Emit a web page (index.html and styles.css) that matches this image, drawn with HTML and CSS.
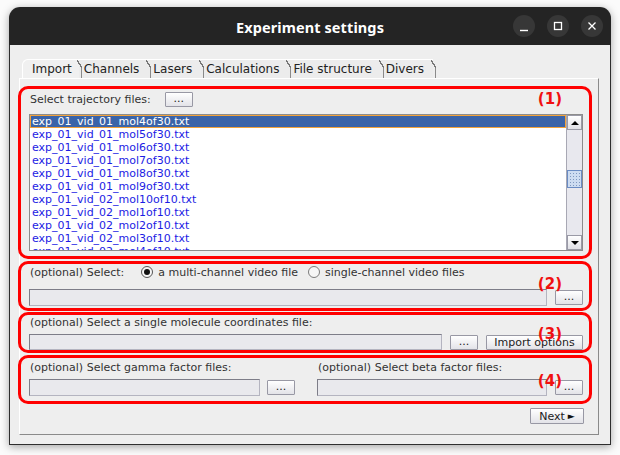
FILE: index.html
```html
<!DOCTYPE html>
<html>
<head>
<meta charset="utf-8">
<link rel="stylesheet" href="styles.css">
</head>
<body>
<div class="window">
  <div class="titlebar">
    <span class="title">Experiment settings</span>
    <div class="wbtns">
      <span class="wbtn"><svg width="22" height="22" viewBox="0 0 22 22"><path d="M7 15.5h8" stroke="#fff" stroke-width="1.4" fill="none"/></svg></span>
      <span class="wbtn"><svg width="22" height="22" viewBox="0 0 22 22"><rect x="7.5" y="7.5" width="7" height="7" stroke="#fff" stroke-width="1.3" fill="none"/></svg></span>
      <span class="wbtn"><svg width="22" height="22" viewBox="0 0 22 22"><path d="M7.5 7.5l7 7M14.5 7.5l-7 7" stroke="#fff" stroke-width="1.3" fill="none"/></svg></span>
    </div>
  </div>
  <div class="client">
    <div class="tabs">
      <div class="tab sel">Import</div>
      <div class="tab">Channels</div>
      <div class="tab">Lasers</div>
      <div class="tab">Calculations</div>
      <div class="tab">File structure</div>
      <div class="tab">Divers</div>
      <div class="tabfill"></div>
    </div>
    <div class="panel">
      <section class="box box1">
        <div class="row">
          <span class="lbl">Select trajectory files:</span>
          <span class="btn dots btn-traj">...</span>
        </div>
        <div class="list">
          <div class="items">
            <div class="item selected">exp_01_vid_01_mol4of30.txt</div>
            <div class="item">exp_01_vid_01_mol5of30.txt</div>
            <div class="item">exp_01_vid_01_mol6of30.txt</div>
            <div class="item">exp_01_vid_01_mol7of30.txt</div>
            <div class="item">exp_01_vid_01_mol8of30.txt</div>
            <div class="item">exp_01_vid_01_mol9of30.txt</div>
            <div class="item">exp_01_vid_02_mol10of10.txt</div>
            <div class="item">exp_01_vid_02_mol1of10.txt</div>
            <div class="item">exp_01_vid_02_mol2of10.txt</div>
            <div class="item">exp_01_vid_02_mol3of10.txt</div>
            <div class="item">exp_01_vid_02_mol4of10.txt</div>
          </div>
          <div class="sb">
            <div class="sb-btn"><span class="tri up"></span></div>
            <div class="sb-track"><div class="sb-thumb"></div></div>
            <div class="sb-btn"><span class="tri down"></span></div>
          </div>
        </div>
        <span class="mark m1">(1)</span>
      </section>

      <section class="box box2">
        <div class="row">
          <span class="lbl">(optional) Select:</span>
          <span class="radio on"></span>
          <span class="rlbl">a multi-channel video file</span>
          <span class="radio r2"></span>
          <span class="rlbl">single-channel video files</span>
        </div>
        <div class="frow">
          <span class="field"></span>
          <span class="btn dots">...</span>
        </div>
        <span class="mark m2">(2)</span>
      </section>

      <section class="box box3">
        <div class="row">
          <span class="lbl">(optional) Select a single molecule coordinates file:</span>
        </div>
        <div class="frow">
          <span class="field"></span>
          <span class="btn dots">...</span>
          <span class="btn wide">Import options</span>
        </div>
        <span class="mark m3">(3)</span>
      </section>

      <section class="box box4">
        <div class="cols">
          <div class="col">
            <div class="row"><span class="lbl">(optional) Select gamma factor files:</span></div>
            <div class="frow">
              <span class="field"></span>
              <span class="btn dots g">...</span>
            </div>
          </div>
          <div class="col">
            <div class="row"><span class="lbl">(optional) Select beta factor files:</span></div>
            <div class="frow">
              <span class="field"></span>
              <span class="btn dots">...</span>
            </div>
          </div>
        </div>
        <span class="mark m4">(4)</span>
      </section>

      <div class="footer">
        <span class="btn next">Next <span class="arr">&#9658;</span></span>
      </div>
    </div>
  </div>
</div>
</body>
</html>
```

FILE: styles.css
```css
html, body {
  margin: 0;
  padding: 0;
}
body {
  background: #fbfbfb;
  width: 620px;
  height: 455px;
  overflow: hidden;
  font-family: "DejaVu Sans", Verdana, sans-serif;
  font-size: 11px;
  color: #333333;
}
.window {
  margin: 7px 0 0 9px;
  width: 602px;
  border-radius: 11px 11px 0 0;
  box-shadow: 0 2px 9px rgba(0, 0, 0, 0.35);
}
.titlebar {
  height: 38px;
  background: #242424;
  border-radius: 11px 11px 0 0;
  display: grid;
  grid-template-columns: 1fr auto 1fr;
  align-items: center;
}
.title {
  grid-column: 2;
  font-family: "Noto Sans", "DejaVu Sans", sans-serif;
  font-weight: 700;
  font-size: 14.5px;
  color: #ffffff;
  letter-spacing: 0.1px;
  padding-top: 1px;
}
.wbtns {
  grid-column: 3;
  justify-self: end;
  display: flex;
  gap: 12px;
  padding-right: 8px;
}
.wbtn {
  width: 22px;
  height: 22px;
  border-radius: 50%;
  background: #373737;
  display: block;
}
.wbtn svg { display: block; }

.client {
  background: #eeeeee;
  border: 1px solid #2e2e2e;
  border-top: 0;
  box-sizing: border-box;
  height: 400px;
  padding: 14px 11px 9px 9px;
  display: flex;
  flex-direction: column;
}
.tabs {
  display: flex;
  height: 19px;
  padding-left: 3px;
  font-size: 12px;
  color: #222222;
}
.tab {
  position: relative;
  height: 19px;
  line-height: 19px;
  padding: 0 9px 0 5px;
  border-top: 1px solid #ffffff;
  box-sizing: border-box;
  background: #ececec;
}
.tab.sel {
  padding: 0 7px 0 9px;
  background: #f0f0f0;
  border-top-left-radius: 6px;
  border-left: 1px solid #ffffff;
}
.tab::after {
  content: "";
  position: absolute;
  z-index: 1;
  right: -3px;
  top: 0;
  bottom: 0;
  width: 5px;
  background:
    linear-gradient(to bottom left, transparent calc(50% - 0.6px), #777777 calc(50% - 0.6px), #777777 calc(50% + 0.6px), transparent calc(50% + 0.6px)) left top / 5px 8px no-repeat,
    linear-gradient(#8a8a8a, #8a8a8a) right 8px / 1px calc(100% - 8px) no-repeat;
}
.tabfill {
  flex: 1;
  align-self: flex-end;
  height: 19px;
}
.panel {
  flex: 1;
  border-top: 1px solid #ffffff;
  border-left: 1px solid #ffffff;
  border-right: 1px solid #8a8a8a;
  border-bottom: 1px solid #8a8a8a;
  padding-top: 7px;
  display: flex;
  flex-direction: column;
}
.box {
  position: relative;
  margin-left: -2px;
  width: 574px;
  box-sizing: border-box;
  border: 3px solid #ff0000;
  border-radius: 10px;
  padding: 0 6px 0 8px;
  display: flex;
  flex-direction: column;
}
.row {
  display: flex;
  align-items: center;
}
.lbl { margin-left: 1px; }
.box1 { padding-top: 3px; padding-bottom: 5px; }
.box1 .row { height: 15px; }
.box2 { margin-top: 2px; padding-bottom: 2px; }
.box2 .row { height: 16px; }
.box2 .frow { margin-top: 9px; }
.box2 .field { height: 17px; }
.box3 { margin-top: 1px; }
.box3 .row { height: 15px; }
.box3 .frow { margin-top: 4px; }
.box4 { margin-top: 2px; padding-top: 1px; padding-bottom: 5px; }
.box4 .row { height: 16px; }
.box4 .frow { margin-top: 4px; }
.box4 .field { height: 17px; }

.list {
  margin-top: 7px;
  height: 137px;
  box-sizing: border-box;
  border: 1px solid #8c8c8c;
  background: #ffffff;
  display: flex;
  overflow: hidden;
}
.items {
  flex: 1;
  overflow: hidden;
}
.item {
  height: 13px;
  line-height: 13px;
  padding-left: 2px;
  color: #1c1ce4;
  white-space: nowrap;
  box-sizing: border-box;
}
.item.selected {
  background: #3a63a8;
  color: #ffffff;
  outline: 1px solid #f2a23a;
  outline-offset: -1px;
}
.sb {
  width: 15px;
  display: flex;
  flex-direction: column;
  background: #e8e8ee;
  border-left: 1px solid #a8a8b4;
}
.sb-btn {
  height: 15px;
  box-sizing: border-box;
  border: 1px solid #9a9aa6;
  background: linear-gradient(#ffffff, #e0e0e6);
  display: flex;
  align-items: center;
  justify-content: center;
}
.tri {
  width: 0;
  height: 0;
  border-left: 4px solid transparent;
  border-right: 4px solid transparent;
}
.tri.up { border-bottom: 4px solid #000000; }
.tri.down { border-top: 4px solid #000000; }
.sb-track {
  flex: 1;
  display: flex;
  flex-direction: column;
}
.sb-thumb {
  margin-top: 40px;
  height: 18px;
  box-sizing: border-box;
  border: 1px solid #6a8cc4;
  background-color: #cddcf1;
  background-image: radial-gradient(circle, #7f98c0 0.7px, transparent 0.9px);
  background-size: 3px 3px;
  background-position: 1px 1px;
}

.mark {
  position: absolute;
  right: 27px;
  font-family: "DejaVu Sans", sans-serif;
  font-weight: 700;
  font-size: 15px;
  line-height: 17px;
  color: #f01010;
}
.m1 { top: 2px; }
.m2 { top: 12px; }
.m3 { top: 11px; }
.m4 { top: 15px; }

.radio {
  width: 12px;
  height: 12px;
  box-sizing: border-box;
  border-radius: 50%;
  border: 1px solid #7c7c7c;
  background: #f6f6f6;
  display: flex;
  align-items: center;
  justify-content: center;
  margin-left: 17px;
}
.radio.on {
  border-color: #555555;
}
.radio.on::after {
  content: "";
  width: 6px;
  height: 6px;
  border-radius: 50%;
  background: #111111;
}
.radio.r2 { margin-left: 10px; }
.rlbl { margin-left: 5px; }

.frow {
  display: flex;
  align-items: center;
}
.field {
  flex: 1;
  height: 16px;
  box-sizing: border-box;
  background: #e9e9ed;
  border: 1px solid #b4b4c0;
  border-top-color: #7d7d88;
  border-left-color: #7d7d88;
}
.btn {
  height: 15px;
  box-sizing: border-box;
  border: 1px solid #9898a4;
  border-radius: 1px;
  background: linear-gradient(#ffffff, #e3e3e8);
  display: inline-flex;
  align-items: center;
  justify-content: center;
  color: #222222;
  line-height: 13px;
}
.btn.dots {
  width: 28px;
  margin-left: 8px;
  align-items: flex-end;
  line-height: 12px;
  padding-bottom: 1px;
}
.box4 .btn.dots.g { margin-left: 7px; }
.box1 .btn.dots { margin-left: 14px; }
.btn.wide {
  width: 97px;
  margin-left: 8px;
}
.cols {
  display: flex;
  gap: 22px;
}
.col {
  flex: 1;
  display: flex;
  flex-direction: column;
}
.footer {
  display: flex;
  justify-content: flex-end;
  margin-top: 4px;
  padding-right: 14px;
}
.btn.next {
  width: 54px;
  height: 16px;
}
.arr {
  font-size: 9px;
  margin-left: 3px;
  color: #111111;
}
```
